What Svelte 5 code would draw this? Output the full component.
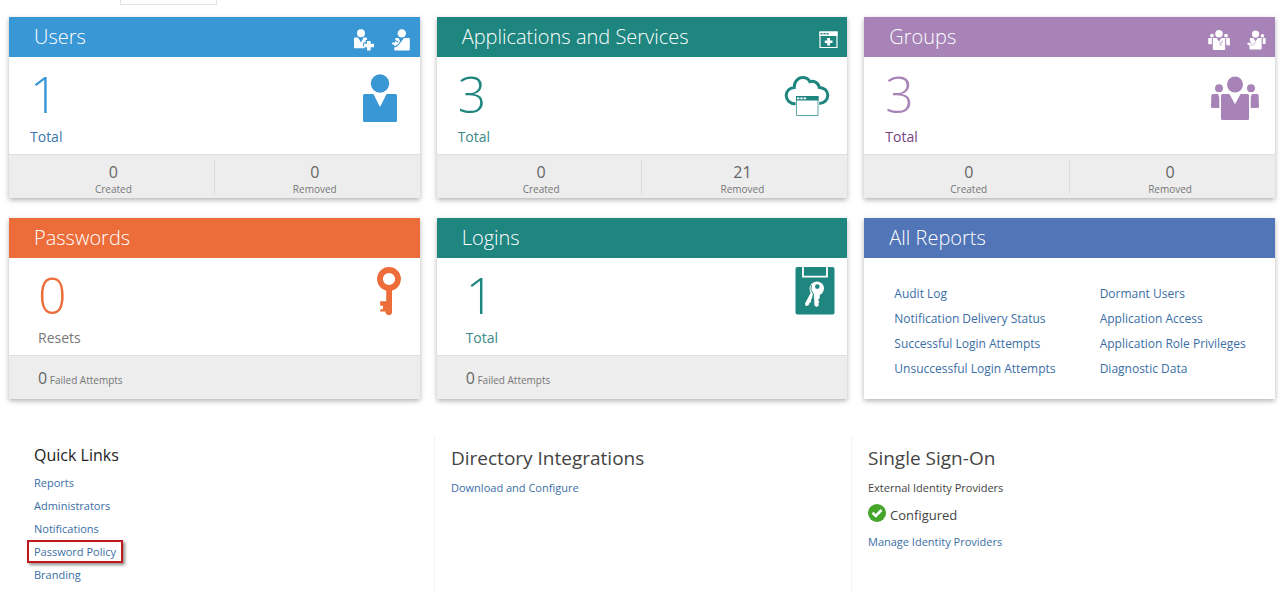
<script>
  const cards = [
    { title: 'Users', tone: 'blue', value: 1, label: 'Total', icon: 'user', actions: ['user-add', 'user-import'], created: 0, removed: 0 },
    { title: 'Applications and Services', tone: 'teal', value: 3, label: 'Total', icon: 'cloud', actions: ['app-add'], created: 0, removed: 21 },
    { title: 'Groups', tone: 'purple', value: 3, label: 'Total', icon: 'group', actions: ['group-add', 'group-import'], created: 0, removed: 0 },
    { title: 'Passwords', tone: 'orange', value: 0, label: 'Resets', icon: 'key', actions: [], failed: 0 },
    { title: 'Logins', tone: 'teal', value: 1, label: 'Total', icon: 'login', actions: [], failed: 0 }
  ];

  const reports = [
    'Audit Log', 'Dormant Users',
    'Notification Delivery Status', 'Application Access',
    'Successful Login Attempts', 'Application Role Privileges',
    'Unsuccessful Login Attempts', 'Diagnostic Data'
  ];

  const quickLinks = ['Reports', 'Administrators', 'Notifications', 'Password Policy', 'Branding'];

  const actionNames = {
    'user-add': 'Add user',
    'user-import': 'Import users',
    'app-add': 'Add application',
    'group-add': 'Add group',
    'group-import': 'Import groups'
  };
</script>

{#snippet actionIcon(name)}
  {#if name === 'user-add'}
    <svg width="22" height="22" viewBox="0 0 22 22" fill="currentColor" aria-hidden="true">
      <circle cx="8" cy="4.2" r="4" />
      <path d="M1.8 8.4H5L8 13.5 10.6 8.4H13.2Q14 8.4 14 9.2V11H12.6V13.4H10.2V17.8H11.5V19.2H1.8Q1 19.2 1 18.4V9.2Q1 8.4 1.8 8.4Z" />
      <path d="M14 12H17.6V14.8H21V18.2H17.6V21.4H14V18.2H11V14.8H14Z" />
    </svg>
  {:else if name === 'user-import'}
    <svg width="18" height="22" viewBox="0 0 18 22" fill="currentColor" aria-hidden="true">
      <circle cx="9.8" cy="4.4" r="4.2" />
      <path d="M8 14.2L12 9H17Q17.8 9 17.8 9.8V20.6Q17.8 21.4 17 21.4H3Q2.2 21.4 2.2 20.6V18.4Q6 17.8 8 14.2Z" />
      <path d="M3.4 9H6.6L8 12Q6.4 16.4 2 17V15.4H.2V13.4H3.4V11.4L5.8 13.8 4.4 15.4Q6 14 6.4 12.4L3.4 11Z" />
    </svg>
  {:else if name === 'app-add'}
    <svg width="19" height="18" viewBox="0 0 19 18" aria-hidden="true">
      <path d="M1 1H18V16.5H1Z" fill="none" stroke="currentColor" stroke-width="1.2" />
      <path d="M.5.5H18.5V5H.5Z" fill="currentColor" />
      <path class="cut" d="M1.5 2H3.5V3.4H1.5ZM4.5 2H6.5V3.4H4.5ZM7.5 2H9.5V3.4H7.5Z" />
      <path d="M8.2 7H11V9.4H13.5V12H11V14.6H8.2V12H5.8V9.4H8.2Z" fill="currentColor" />
    </svg>
  {:else if name === 'group-add'}
    <svg width="22" height="22" viewBox="0 0 22 22" fill="currentColor" aria-hidden="true">
      <circle cx="11" cy="4.8" r="3.8" />
      <circle cx="4" cy="6.6" r="1.9" />
      <circle cx="18" cy="6.6" r="1.9" />
      <path d="M1 9H3.8V15.2H1Q.2 15.2.2 14.4V9.8Q.2 9 1 9Z" />
      <path d="M18.2 9H21Q21.8 9 21.8 9.8V16.4H18.2Z" />
      <path d="M4.8 9H8.6L11 12.6 13.4 9H17.2V20.2Q17.2 21 16.4 21H5.6Q4.8 21 4.8 20.2Z" />
      <path class="cut-line" d="M14.2 11.2V13.6H12V16H14.4M17.2 17.6V16H20" />
    </svg>
  {:else}
    <svg width="19" height="22" viewBox="0 0 20 22" fill="currentColor" aria-hidden="true">
      <circle cx="9" cy="4.8" r="3.8" />
      <circle cx="16.2" cy="6.6" r="1.9" />
      <path d="M16.6 9H18.8Q19.6 9 19.6 9.8V14.4Q19.6 15.2 18.8 15.2H16.6Z" />
      <path d="M3 9H6.8L9 12.6 11.4 9H15.4V20.2Q15.4 21 14.6 21H3.4Q2.6 21 2.6 20.2V17.4L.4 15.6V14H3.8L3 11Z" />
      <path class="cut-line" d="M2.2 12.2L5 14.6 2.6 17.2M4.8 17.2Q8.2 16 8.8 13" />
    </svg>
  {/if}
{/snippet}

{#snippet tileIcon(name)}
  {#if name === 'user'}
    <svg width="48" height="48" viewBox="0 0 48 48" fill="currentColor" aria-hidden="true">
      <circle cx="24" cy="9.5" r="9.2" />
      <path d="M8.5 20H17.4L24 33 30.6 20H39.5Q41 20 41 21.5V46.5Q41 48 39.5 48H8.5Q7 48 7 46.5V21.5Q7 20 8.5 20Z" />
    </svg>
  {:else if name === 'cloud'}
    <svg width="48" height="48" viewBox="0 0 48 48" aria-hidden="true">
      <path d="M12.6 29.7C6.8 30 3.2 26 3.2 21.6C3.2 16.8 7 13.6 11.2 13.5C11 8 14.8 3.6 19.8 3.6C23.2 3.6 25.6 5.2 26.8 7.6C31 6.4 35.6 9 36.2 13.4C41 13.6 44.8 16.8 44.8 21.2C44.8 26 41 29.4 36.2 29.4" fill="none" stroke="currentColor" stroke-width="3" />
      <path d="M13.5 22.5H35V41.5H13.5Z" fill="#fff" stroke="currentColor" stroke-width="1" stroke-opacity=".7" />
      <path d="M13 22H35.5V26.5H13Z" fill="currentColor" />
      <path d="M14 23.4H16.5V25.3H14ZM17.3 23.4H19.8V25.3H17.3ZM20.6 23.4H23.1V25.3H20.6Z" fill="#fff" />
    </svg>
  {:else if name === 'group'}
    <svg width="48" height="48" viewBox="0 0 48 48" fill="currentColor" aria-hidden="true">
      <circle cx="24" cy="10.5" r="8" />
      <circle cx="8" cy="14.3" r="4" />
      <circle cx="40" cy="14.3" r="4" />
      <path d="M1.8 20H7Q8.3 22 8.3 26V34H1.6Q0 34 0 32.5L.4 21.5Q.5 20 1.8 20Z" />
      <path d="M46.2 20H41Q39.7 22 39.7 26V34H46.4Q48 34 48 32.5L47.6 21.5Q47.5 20 46.2 20Z" />
      <path d="M11.5 20H18.4L24 30.2 29.6 20H36.5Q38 20 38 21.5V44.5Q38 46 36.5 46H11.5Q10 46 10 44.5V21.5Q10 20 11.5 20Z" />
    </svg>
  {:else if name === 'key'}
    <svg width="40" height="48" viewBox="0 0 40 48" aria-hidden="true">
      <circle cx="21" cy="12" r="9" fill="none" stroke="currentColor" stroke-width="5.8" />
      <path d="M18.2 22H24V46L22.5 48H19.5L17.5 46V44.4H12.2V42.2H15V38.8H12.2V34.2H18.2Z" fill="currentColor" />
    </svg>
  {:else}
    <svg width="40" height="48" viewBox="0 0 40 48" aria-hidden="true">
      <rect x="0.5" width="39" height="47.5" rx="2" fill="currentColor" />
      <path d="M8 0V9.7H32V0" fill="none" stroke="#fff" stroke-width="1.8" />
      <path d="M17 16.5Q13 20 15.6 26L10 36.4 10.6 39 13.4 38.4 14.6 35.8 16.2 35.2 16 33.4 18.4 30Z" fill="#fff" />
      <circle cx="22" cy="21.5" r="7" fill="#fff" />
      <path d="M19 27H24.8L24.6 31.4 23 33 24.4 34.8 23.4 36.6 23.8 38.4 21.6 40 19.4 38.6Z" fill="#fff" />
      <circle cx="22.3" cy="19.6" r="2.3" fill="currentColor" />
      <path d="M16.4 18Q14.6 23 18.4 27L16.8 33" fill="none" stroke="currentColor" stroke-width="0.9" />
    </svg>
  {/if}
{/snippet}

<div class="tab-edge"></div>

<main>
  <div class="cards">
    {#each cards as card}
      <section class="card {card.tone}" class:inset={card.failed !== undefined}>
        <header>
          <h2>{card.title}</h2>
          <div class="actions">
            {#each card.actions as action}
              <button type="button" aria-label={actionNames[action]}>{@render actionIcon(action)}</button>
            {/each}
          </div>
        </header>
        <div class="body">
          <div class="stat">
            <span class="value">{card.value}</span>
            <span class="label">{card.label}</span>
          </div>
          {@render tileIcon(card.icon)}
        </div>
        {#if card.failed !== undefined}
          <footer class="failed"><p><b>{card.failed}</b> Failed Attempts</p></footer>
        {:else}
          <footer class="counts">
            <div><b>{card.created}</b><span>Created</span></div>
            <div><b>{card.removed}</b><span>Removed</span></div>
          </footer>
        {/if}
      </section>
    {/each}

    <section class="card indigo">
      <header><h2>All Reports</h2></header>
      <ul class="reports">
        {#each reports as report}
          <li><a href="#reports">{report}</a></li>
        {/each}
      </ul>
    </section>
  </div>

  <div class="panels">
    <section>
      <h3 class="strong">Quick Links</h3>
      <ul>
        {#each quickLinks as link}
          <li class:marked={link === 'Password Policy'}><a href="#links">{link}</a></li>
        {/each}
      </ul>
    </section>
    <section>
      <h3>Directory Integrations</h3>
      <p><a href="#directory">Download and Configure</a></p>
    </section>
    <section>
      <h3>Single Sign-On</h3>
      <p>External Identity Providers</p>
      <div class="status">
        <svg width="18" height="18" viewBox="0 0 18 18" aria-hidden="true">
          <circle cx="9" cy="9" r="9" fill="#43a52a" />
          <path d="M4.5 8.8L7.8 12 13.5 6" fill="none" stroke="#fff" stroke-width="2.6" />
        </svg>
        <span>Configured</span>
      </div>
      <p><a href="#providers">Manage Identity Providers</a></p>
    </section>
  </div>
</main>

<style>
  :global(body) {
    margin: 0;
    background: #fff;
  }

  .tab-edge {
    box-sizing: border-box;
    width: 97px;
    height: 5px;
    margin-left: 120px;
    border: 1px solid #e2e2e2;
    border-top: 0;
  }

  main {
    padding-top: 12px;
    font-family: "Open Sans", "Noto Sans", sans-serif;
    font-size: 12px;
    color: #444;
  }

  h2, h3, p, ul {
    margin: 0;
    padding: 0;
    font-weight: 400;
    list-style: none;
  }

  a {
    color: #3a6ea5;
    text-decoration: none;
  }

  .cards {
    display: grid;
    grid-template-columns: repeat(3, 1fr);
    gap: 20px 17px;
    padding: 0 5px 0 9px;
  }

  .card {
    display: flex;
    flex-direction: column;
    background: #fff;
    box-shadow: 0 2px 5px rgba(0, 0, 0, 0.3);
    color: var(--tone);
  }

  .blue { --tone: #3a97d6; --label: #3a78ad; }
  .teal { --tone: #1e857f; --label: #3b8a86; }
  .purple { --tone: #a783b8; --label: #75437f; }
  .orange { --tone: #ec6d39; --label: #777; }
  .indigo { --tone: #5175b7; }

  header {
    display: flex;
    justify-content: space-between;
    align-items: center;
    height: 40px;
    padding: 0 9px 0 25px;
    background: var(--tone);
    color: #fff;
  }

  h2 {
    font-size: 20px;
    font-weight: 300;
    line-height: 40px;
  }

  .actions {
    display: flex;
    gap: 17px;
    padding-top: 5px;
  }

  .blue .actions { padding-right: 1px; }

  button {
    display: flex;
    padding: 0;
    border: 0;
    background: none;
    color: #fff;
    cursor: pointer;
  }

  .cut { fill: var(--tone); }
  .cut-line {
    fill: none;
    stroke: var(--tone);
    stroke-width: 0.8;
    stroke-opacity: 0.7;
  }

  .body {
    display: flex;
    justify-content: space-between;
    align-items: flex-start;
    height: 97px;
    box-sizing: border-box;
    padding: 17px 16px 0 21px;
  }

  .inset .body { padding: 9px 12px 0 29px; }
  .inset .stat { padding-top: 8px; }

  .stat {
    display: flex;
    flex-direction: column;
  }

  .value {
    font-size: 50px;
    font-weight: 300;
    line-height: 40px;
  }

  .label {
    padding-top: 12px;
    font-size: 14px;
    line-height: 22px;
    color: var(--label);
  }

  footer {
    box-sizing: border-box;
    height: 44px;
    border-top: 1px solid #dedede;
    background: #ededed;
    color: #777;
    font-size: 10px;
  }

  footer b {
    font-size: 16px;
    font-weight: 400;
    color: #666;
  }

  .counts {
    display: grid;
    grid-template-columns: 1fr 1fr;
    align-items: start;
    padding: 5px 5px 0 4px;
  }

  .counts div {
    display: flex;
    flex-direction: column;
    align-items: center;
  }

  .counts div + div { border-left: 1px solid #dcdcdc; }
  .counts b { line-height: 24px; }
  .counts span { line-height: 10px; }

  .failed {
    padding: 0 29px;
    line-height: 44px;
  }

  .reports {
    display: grid;
    grid-template-columns: 1fr 1fr;
    padding-top: 23px;
  }

  .reports li {
    padding-left: 30px;
    line-height: 25px;
    white-space: nowrap;
  }

  .panels {
    display: grid;
    grid-template-columns: repeat(3, 1fr);
    margin-top: 37px;
    padding: 0 12px 0 17px;
    font-size: 11px;
    line-height: 23px;
  }

  .panels section {
    min-height: 147px;
    padding: 8px 0 0 17px;
  }

  .panels section + section {
    padding-left: 16px;
    border-left: 1px solid #f3f3f3;
  }

  h3 {
    margin-bottom: 4px;
    font-size: 19px;
    line-height: 28px;
  }

  h3.strong {
    font-size: 16px;
    line-height: 23px;
    color: #222;
  }

  .marked {
    box-sizing: border-box;
    width: fit-content;
    margin-left: -7px;
    padding: 0 5px;
    border: 2px solid #bf1a1f;
    line-height: 19px;
    box-shadow: 2px 2px 3px rgba(0, 0, 0, 0.45);
  }

  .status {
    display: flex;
    gap: 4px;
    font-size: 13px;
    line-height: 31px;
  }

  .status svg { margin-top: 5px; }
  .status span { padding-top: 2px; line-height: 29px; }
</style>
